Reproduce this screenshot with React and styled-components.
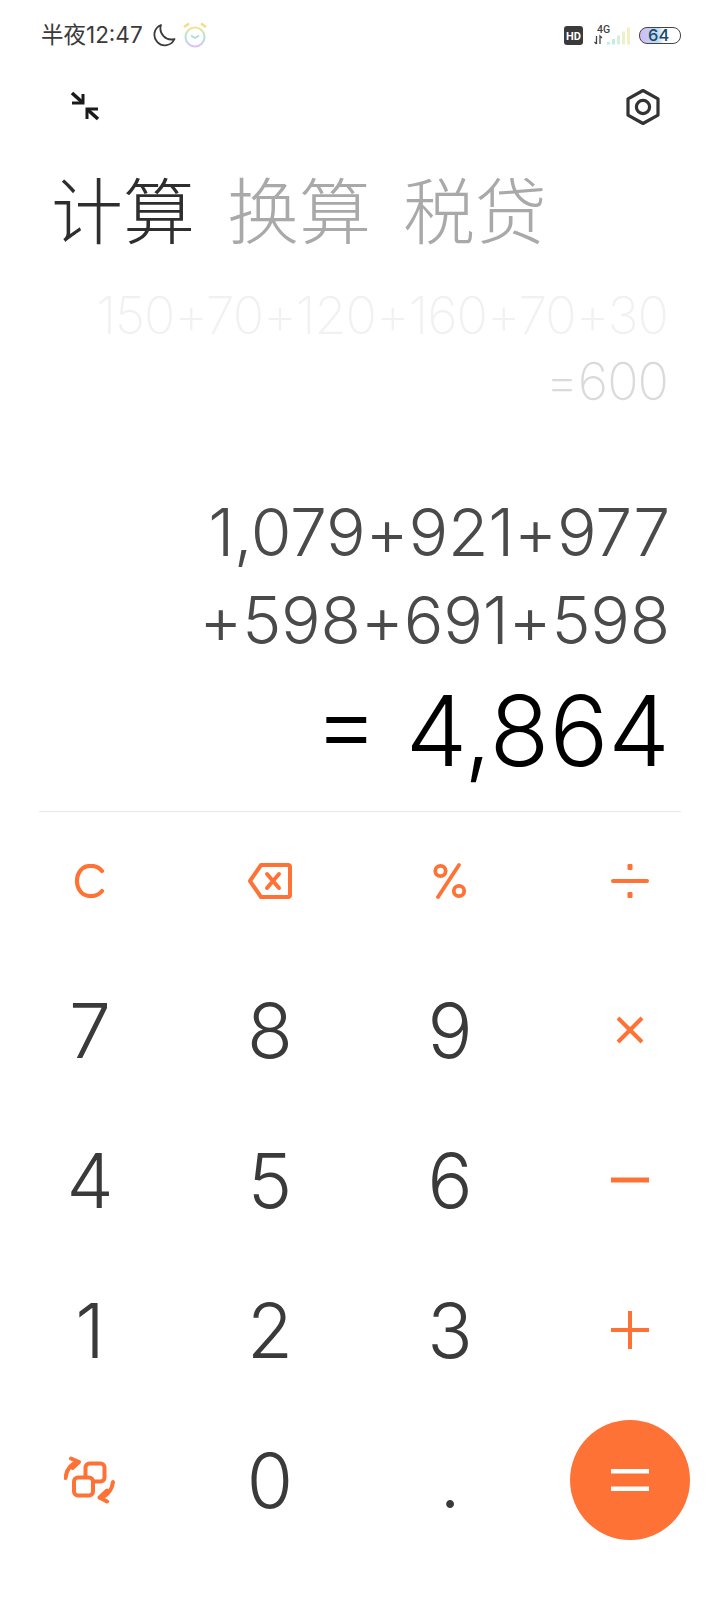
import React from 'react';
import styled, { createGlobalStyle } from 'styled-components';

const ORANGE = '#ff7235';

const GlobalStyle = createGlobalStyle`
  html, body {
    margin: 0;
    padding: 0;
    background: #fff;
  }
  body {
    font-family: Inter, "Noto Sans CJK SC", sans-serif;
  }
`;

const Screen = styled.div`
  width: 720px;
  height: 1600px;
  overflow: hidden;
  display: flex;
  flex-direction: column;
  background: #fff;
`;

const StatusBar = styled.div`
  flex: none;
  height: 70px;
  padding: 0 39px 0 41px;
  display: flex;
  align-items: center;
  justify-content: space-between;
  color: #3a3a3a;
`;

const StatusGroup = styled.div`
  display: flex;
  align-items: center;
`;

const Clock = styled.span`
  font-size: 22.5px;
  line-height: 26px;
  margin-right: 9px;
`;

const Battery = styled.div`
  width: 32px;
  height: 15px;
  border: 1.5px solid #444;
  border-radius: 8px;
  font-size: 16.5px;
  line-height: 15px;
  font-weight: 500;
  color: #1c4a63;
  padding-left: 8px;
  background: linear-gradient(90deg, #d0bcf6 0%, #bfdcf6 46%, #fff 60%);
  margin-left: 9px;
`;

const Toolbar = styled.div`
  flex: none;
  height: 72px;
  padding: 0 59px 0 70px;
  display: flex;
  align-items: center;
  justify-content: space-between;
`;

const Tabs = styled.div`
  flex: none;
  display: flex;
  gap: 32px;
  padding: 24px 0 0 51px;
`;

const Tab = styled.span`
  font-family: "Noto Sans CJK SC", sans-serif;
  font-weight: 200;
  font-size: 72px;
  line-height: 82px;
  color: ${({ active }) => (active ? '#2e2e2e' : '#a9a9a9')};
`;

const Display = styled.div`
  flex: 1;
  padding: 0 50px 0 40px;
  display: flex;
  flex-direction: column;
  align-items: flex-end;
`;

const History = styled.div`
  margin-top: ${({ faded }) => (faded ? '35px' : '0')};
  margin-right: 2px;
  font-size: 52px;
  line-height: 66px;
  font-weight: 200;
  letter-spacing: -1px;
  text-align: right;
  color: ${({ faded }) => (faded ? '#f1f1f1' : '#dadada')};
`;

const Expression = styled.div`
  font-size: 66px;
  line-height: 88px;
  font-weight: 340;
  color: #4a4a4a;
  text-align: right;
  letter-spacing: -0.2px;
  margin-top: ${({ first }) => (first ? '73px' : '0')};
`;

const Result = styled.div`
  font-size: 98px;
  line-height: 112px;
  margin-top: 11px;
  font-weight: 350;
  color: #000;
`;

const Divider = styled.div`
  flex: none;
  height: 1px;
  margin: 0 39px;
  background: #e8e8e8;
`;

const Keypad = styled.div`
  flex: none;
  display: grid;
  grid-template-columns: repeat(4, 180px);
  grid-template-rows: 143px repeat(4, 150px);
  padding-bottom: 45px;
`;

const Key = styled.div`
  display: flex;
  align-items: center;
  justify-content: center;
  font-size: 75px;
  font-weight: 340;
  color: #3a3a3a;
  padding-bottom: ${({ top }) => (top ? '6px' : '0')};
`;

const EqualsButton = styled.div`
  width: 120px;
  height: 120px;
  border-radius: 50%;
  background: ${ORANGE};
  display: flex;
  align-items: center;
  justify-content: center;
`;

const CompressIcon = () => (
  <svg width="30" height="30" viewBox="0 0 30 30" fill="none" stroke="#1a1a1a" strokeWidth="3.6">
    <path d="M2 2 L12 11" />
    <path d="M2 12 H13 V3" strokeWidth="3" />
    <path d="M28 28 L18 19" />
    <path d="M17 28 V18 H28" strokeWidth="3" />
  </svg>
);

const HexIcon = () => (
  <svg width="36" height="38" viewBox="0 0 36 38" fill="none" stroke="#333" strokeWidth="3.2" style={{ marginTop: 2 }}>
    <path d="M18 2.5 L33 10.8 V27.2 L18 35.5 L3 27.2 V10.8 Z" strokeLinejoin="round" />
    <circle cx="18" cy="19" r="6.6" />
  </svg>
);

const MoonIcon = () => (
  <svg width="24" height="24" viewBox="0 0 24 24" fill="none" stroke="#3a3a3a" strokeWidth="1.8">
    <path d="M9 2 A10.5 10.5 0 1 0 22.5 16 A11 11 0 0 1 9 2 Z" strokeLinejoin="round" />
  </svg>
);

const AlarmIcon = () => (
  <svg width="24" height="26" viewBox="0 0 24 26" fill="none" strokeWidth="2" style={{ marginLeft: 7 }}>
    <defs>
      <linearGradient id="alarm" x1="0" y1="0" x2="0" y2="1">
        <stop offset="0" stopColor="#f4e28e" />
        <stop offset="0.5" stopColor="#a9e6dc" />
        <stop offset="1" stopColor="#dcc3f7" />
      </linearGradient>
    </defs>
    <circle cx="12" cy="15" r="9.5" stroke="url(#alarm)" />
    <path d="M8 13.5 L12 16 L16 13.5" stroke="#a9dcd2" strokeWidth="1.5" />
    <path d="M1 5 L6 1.5 M23 5 L18 1.5" stroke="#f4dd85" strokeWidth="2.6" />
  </svg>
);

const HdIcon = () => (
  <svg width="19" height="19" viewBox="0 0 19 19">
    <rect width="19" height="19" rx="3" fill="#3a3a3a" />
    <text x="9.5" y="14" textAnchor="middle" fontFamily="Roboto" fontWeight="700" fontSize="11" fill="#fff">HD</text>
  </svg>
);

const SignalIcon = () => (
  <svg width="36" height="22" viewBox="0 0 36 22" style={{ marginLeft: 11 }}>
    <text x="3" y="8.5" fontFamily="Roboto" fontWeight="500" fontSize="10.5" fill="#444">4G</text>
    <path d="M2.5 12 V20 M0.5 18 L2.5 20 M6 20 V12 L8 14" stroke="#444" strokeWidth="1.3" fill="none" />
    <rect x="13" y="18" width="3" height="2.5" fill="#c4e8f3" />
    <rect x="18" y="15" width="3" height="5.5" fill="#c6ebe5" />
    <rect x="23" y="11.5" width="3" height="9" fill="#d4efdd" />
    <rect x="28" y="7.5" width="3" height="13" fill="#e9f1cd" />
    <rect x="33" y="3.5" width="3" height="17" fill="#f5efc2" />
  </svg>
);

const ClearIcon = () => (
  <svg width="32" height="34" viewBox="0 0 32 34" fill="none" stroke={ORANGE} strokeWidth="4.2" strokeLinecap="round">
    <path d="M28 7 A14 14 0 0 0 16 2 C8 2 3 9 3 17 C3 25 8 32 16 32 A14 14 0 0 0 28 27" />
  </svg>
);

const BackIcon = () => (
  <svg width="44" height="36" viewBox="0 0 44 36" fill="none" stroke={ORANGE} strokeWidth="4" strokeLinejoin="round" strokeLinecap="round">
    <path d="M13 2 H40 Q42 2 42 4 V32 Q42 34 40 34 H13 L2 18 Z" />
    <path d="M19 11 L31 25 M31 11 L19 25" />
  </svg>
);

const PercentIcon = () => (
  <svg width="34" height="36" viewBox="0 0 34 36" fill="none" stroke={ORANGE} strokeWidth="3.8" strokeLinecap="round">
    <circle cx="7.5" cy="8" r="5.2" />
    <circle cx="26" cy="28" r="5.2" />
    <path d="M26 2 L5 34" />
  </svg>
);

const DivideIcon = () => (
  <svg width="40" height="36" viewBox="0 0 40 36" fill={ORANGE}>
    <rect x="1" y="16" width="38" height="4" rx="2" />
    <rect x="17.5" y="1" width="5" height="6" rx="1.2" />
    <rect x="17.5" y="29" width="5" height="6" rx="1.2" />
  </svg>
);

const TimesIcon = () => (
  <svg width="30" height="30" viewBox="0 0 30 30" fill="none" stroke={ORANGE} strokeWidth="4">
    <path d="M3 3 L27 27 M27 3 L3 27" />
  </svg>
);

const MinusIcon = () => (
  <svg width="38" height="6" viewBox="0 0 38 6" fill={ORANGE}>
    <rect y="0.5" width="38" height="5" />
  </svg>
);

const PlusIcon = () => (
  <svg width="38" height="38" viewBox="0 0 38 38" fill={ORANGE}>
    <rect y="17" width="38" height="4" />
    <rect x="17" width="4" height="38" />
  </svg>
);

const SwitchIcon = () => (
  <svg width="52" height="48" viewBox="0 0 52 48" fill="none" stroke={ORANGE} strokeWidth="4" strokeLinecap="round" strokeLinejoin="round">
    <rect x="21.5" y="7.5" width="19" height="18" rx="4" />
    <rect x="10" y="21.5" width="19" height="18" rx="4" fill="#fff" />
    <path d="M1.5 22 C2.5 14 7 8 13.5 6" />
    <path d="M7 2.5 L15 6 L8.5 12" />
    <path d="M49 26 C48 34 43 40 36 42" />
    <path d="M43 34.5 L35.5 41.5 L43 45.5" />
  </svg>
);

const EqualsIcon = () => (
  <svg width="38" height="22" viewBox="0 0 38 22" fill="#fff">
    <rect width="38" height="4.5" />
    <rect y="17.5" width="38" height="4.5" />
  </svg>
);

const keys = [
  <ClearIcon />, <BackIcon />, <PercentIcon />, <DivideIcon />,
  '7', '8', '9', <TimesIcon />,
  '4', '5', '6', <MinusIcon />,
  '1', '2', '3', <PlusIcon />,
  <SwitchIcon />, '0', '.',
  <EqualsButton><EqualsIcon /></EqualsButton>,
];

export default function App() {
  return (
    <Screen>
      <GlobalStyle />
      <StatusBar>
        <StatusGroup>
          <Clock>半夜12:47</Clock>
          <MoonIcon />
          <AlarmIcon />
        </StatusGroup>
        <StatusGroup>
          <HdIcon />
          <SignalIcon />
          <Battery>64</Battery>
        </StatusGroup>
      </StatusBar>
      <Toolbar>
        <CompressIcon />
        <HexIcon />
      </Toolbar>
      <Tabs>
        <Tab active>计算</Tab>
        <Tab>换算</Tab>
        <Tab>税贷</Tab>
      </Tabs>
      <Display>
        <History faded>150+70+120+160+70+30</History>
        <History>=600</History>
        <Expression first>1,079+921+977</Expression>
        <Expression>+598+691+598</Expression>
        <Result>= 4,864</Result>
      </Display>
      <Divider />
      <Keypad>
        {keys.map((k, i) => (
          <Key key={i} top={i < 4}>{k}</Key>
        ))}
      </Keypad>
    </Screen>
  );
}
